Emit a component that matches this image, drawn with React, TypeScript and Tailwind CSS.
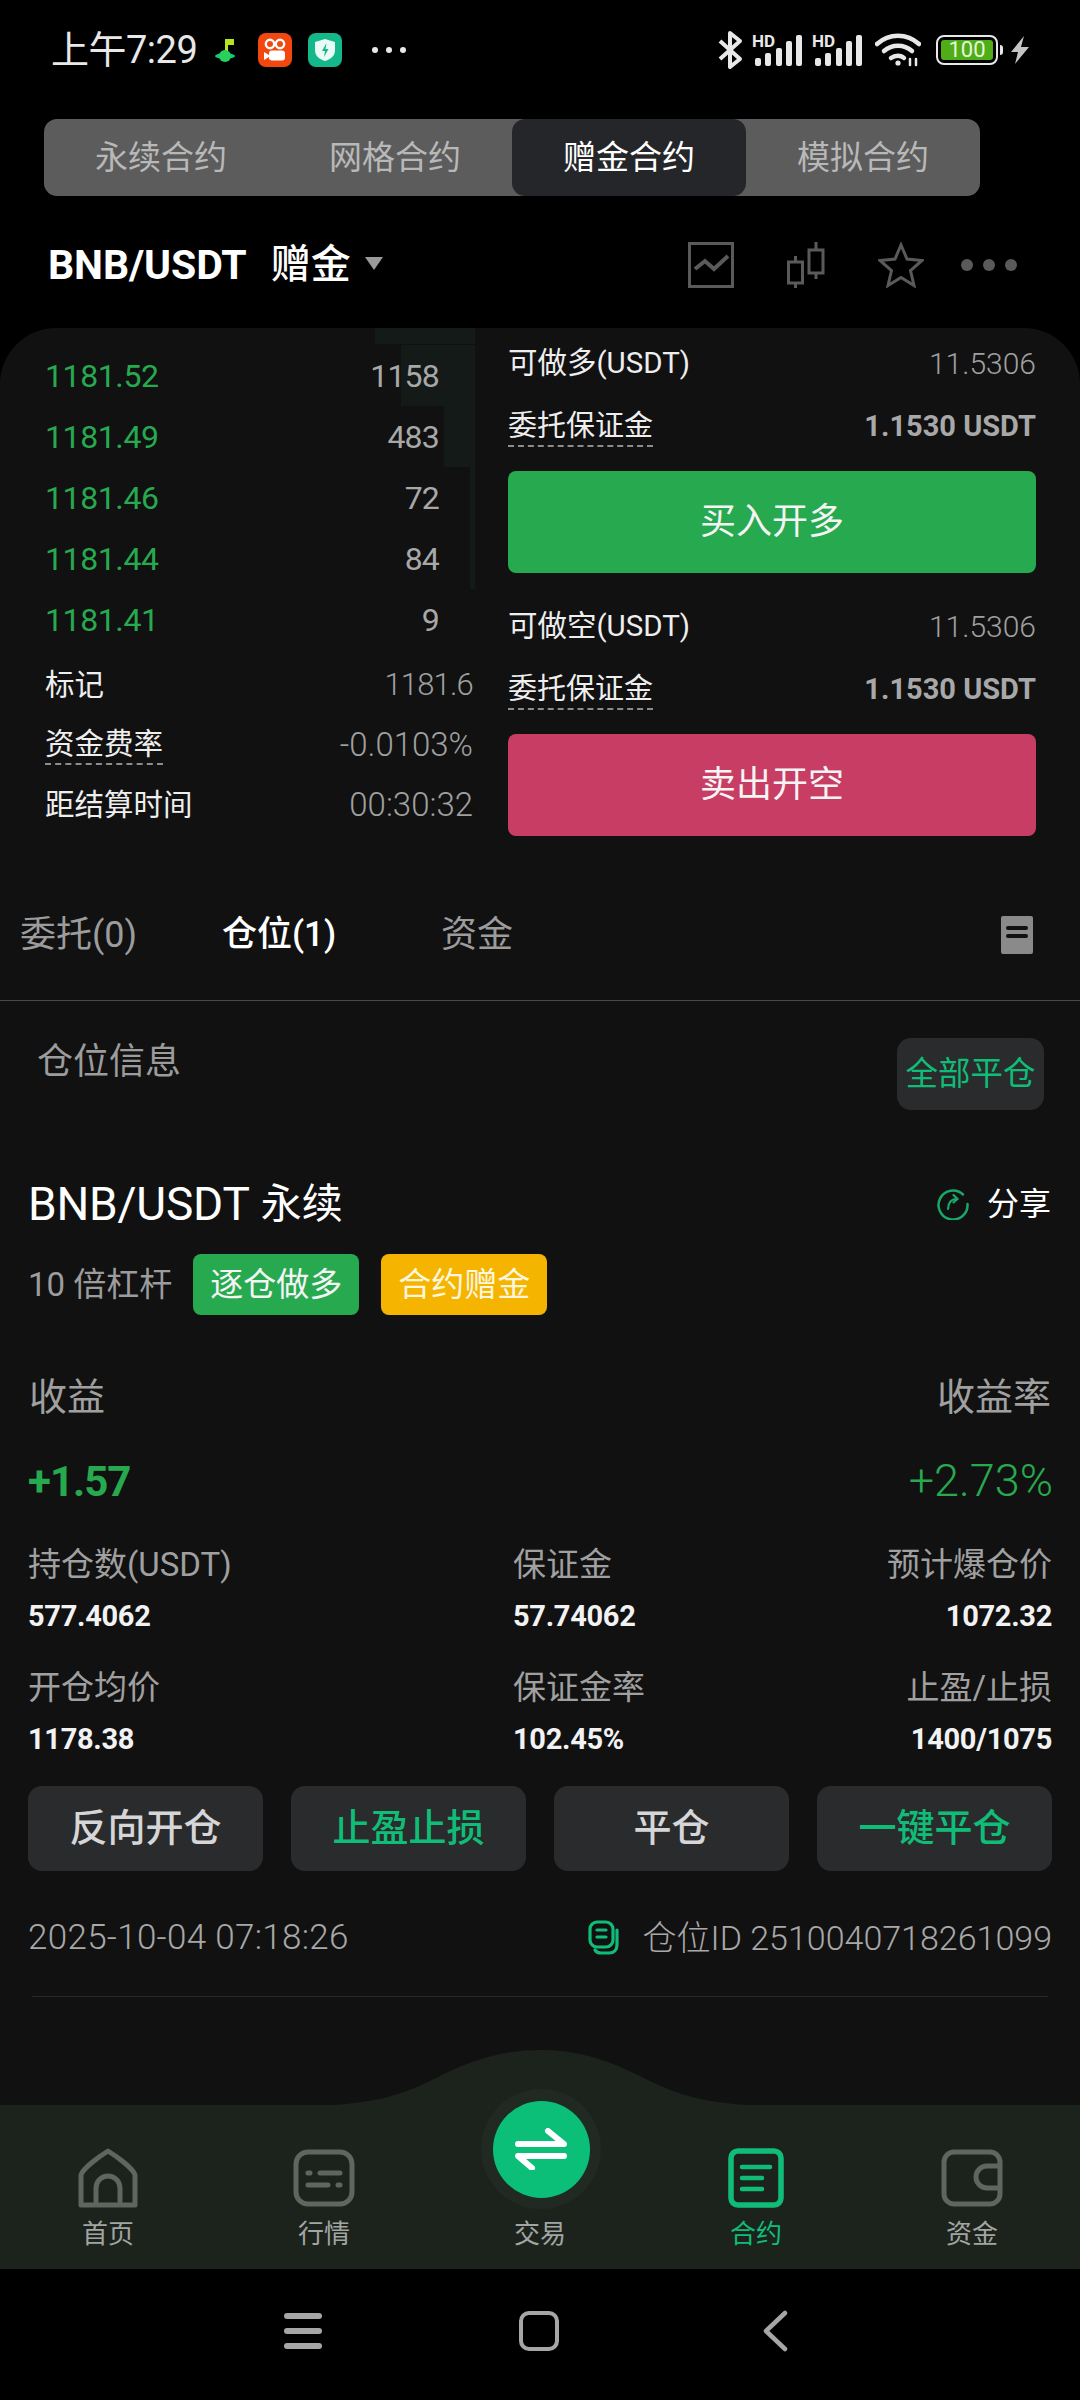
const depth = [
  { price: "1181.52", qty: "1158", bar: "w-[74px]" },
  { price: "1181.49", qty: "483", bar: "w-[31px]" },
  { price: "1181.46", qty: "72", bar: "w-[5px]" },
  { price: "1181.44", qty: "84", bar: "w-[5px]" },
  { price: "1181.41", qty: "9", bar: "w-0" },
];

const StatusBar = () => (
  <div className="flex h-[100px] shrink-0 items-center pl-[51px] pr-[50px]">
    <span className="w-[163px] text-[38px] leading-none tracking-[-0.5px] text-[#e8e8e8]">上午7:29</span>
    <svg width="22" height="30" viewBox="0 0 22 30">
      <path d="M11 4h9v6h-6v12h-3z" fill="#b5e61d" />
      <ellipse cx="11" cy="21" rx="10" ry="3" fill="#16c784" />
      <circle cx="11" cy="21" r="6" fill="#28d05c" />
    </svg>
    <svg className="ml-[22px]" width="34" height="34" viewBox="0 0 34 34">
      <rect width="34" height="34" rx="8" fill="#f2480f" />
      <circle cx="12" cy="11" r="4.2" fill="none" stroke="#fff" strokeWidth="2.4" />
      <circle cx="22" cy="11" r="4.2" fill="none" stroke="#fff" strokeWidth="2.4" />
      <rect x="11" y="17.5" width="16" height="10" rx="3" fill="#fff" />
      <path d="M6 19l5 3v2l-5 3z" fill="#fff" />
    </svg>
    <svg className="ml-[16px]" width="34" height="34" viewBox="0 0 34 34">
      <rect width="34" height="34" rx="8" fill="#14b88a" />
      <path d="M17 6l10 3v8c0 6-4 9-10 11-6-2-10-5-10-11V9z" fill="#eafaf5" />
      <path d="M18.5 10l-4.5 8h3l-1 6 4.5-8h-3z" fill="#14b88a" />
    </svg>
    <div className="ml-[30px] flex gap-[8px]">
      <div className="size-[6px] rounded-full bg-[#e8e8e8]" />
      <div className="size-[6px] rounded-full bg-[#e8e8e8]" />
      <div className="size-[6px] rounded-full bg-[#e8e8e8]" />
    </div>
    <div className="ml-auto flex items-center">
      <svg width="26" height="40" viewBox="0 0 24 40" fill="none" stroke="#e8e8e8" strokeWidth="4" strokeLinejoin="round">
        <path d="M2 11l20 18-10 8V3l10 8L2 29" />
      </svg>
      <Signal className="ml-[9px]" />
      <Signal className="ml-[10px]" />
      <svg className="ml-[13px]" width="46" height="34" viewBox="0 0 46 34" fill="none" stroke="#e8e8e8" strokeLinecap="round">
        <path d="M2 11c12-11 30-11 42 0" strokeWidth="4.5" />
        <path d="M9 18c8-7 20-7 28 0" strokeWidth="4.5" />
        <path d="M16 25c4-3 10-3 13 0" strokeWidth="4.5" />
        <circle cx="23" cy="30" r="2.6" fill="#e8e8e8" stroke="none" />
        <path d="M35 26v6M41 26v6" strokeWidth="2.5" />
      </svg>
      <div className="ml-[15px] flex items-center">
        <div className="flex h-[30px] w-[62px] rounded-[8px] border-[2.5px] border-[#e8e8e8] p-[3px]">
          <div className="flex flex-1 items-center justify-center rounded-[3px] bg-[#4fae18] text-[22px] leading-none text-[#e6f5dc]">100</div>
        </div>
        <div className="ml-[2px] h-[10px] w-[3px] rounded-r-full bg-[#e8e8e8]" />
      </div>
      <svg className="ml-[7px]" width="20" height="30" viewBox="0 0 20 30">
        <path d="M14 1L1 17h7l-3 12L19 12h-8z" fill="#c4c4c4" />
      </svg>
    </div>
  </div>
);

const Signal = ({ className }: { className: string }) => (
  <div className={`relative h-[32px] w-[50px] ${className}`}>
    <svg className="absolute inset-0" width="50" height="32" viewBox="0 0 50 32" fill="#e8e8e8">
      <rect x="3" y="24" width="6" height="8" rx="2" />
      <rect x="13" y="19" width="6" height="13" rx="2" />
      <rect x="24" y="14" width="6" height="18" rx="2" />
      <rect x="34" y="7" width="6" height="25" rx="2" />
      <rect x="44" y="1" width="6" height="31" rx="2" />
    </svg>
    <span className="absolute left-0 top-[-1px] text-[17px] font-bold leading-none text-[#e8e8e8]">HD</span>
  </div>
);

const ContractTabs = () => (
  <div className="mx-[44px] mt-[19px] flex h-[77px] w-[936px] shrink-0 rounded-[13px] bg-[#5c5c5c] text-[33px] text-[#b8b8b8]">
    <div className="flex w-[234px] items-center justify-center">永续合约</div>
    <div className="flex w-[234px] items-center justify-center">网格合约</div>
    <div className="flex w-[234px] items-center justify-center rounded-[13px] bg-[#25262a] text-white">赠金合约</div>
    <div className="flex w-[234px] items-center justify-center">模拟合约</div>
  </div>
);

const TitleRow = () => (
  <div className="flex h-[132px] shrink-0 items-center pl-[48px] pt-[6px]">
    <span className="text-[41px] font-bold leading-none tracking-[-0.1px] text-white">BNB/USDT</span>
    <span className="ml-[24px] text-[40px] font-medium leading-none text-white">赠金</span>
    <div className="ml-[14px] mt-[-4px] h-0 w-0 border-x-[9px] border-t-[13px] border-x-transparent border-t-[#9a9a9a]" />
    <div className="ml-auto mr-[63px] flex items-center">
      <svg width="46" height="46" viewBox="0 0 46 46" fill="none" stroke="#5a5a5a" strokeWidth="3">
        <rect x="1.5" y="1.5" width="43" height="43" />
        <path d="M7 27l10-8 9 8 14-13" strokeWidth="4" />
      </svg>
      <svg className="ml-[53px]" width="38" height="46" viewBox="0 0 38 46" fill="none" stroke="#5a5a5a" strokeWidth="3">
        <rect x="1.5" y="20" width="14" height="21" />
        <path d="M8.5 14v6M8.5 41v5" />
        <rect x="22" y="8" width="14" height="23" />
        <path d="M29 0v8M29 31v6" />
      </svg>
      <svg className="ml-[53px]" width="46" height="46" viewBox="0 0 46 46" fill="none" stroke="#5a5a5a" strokeWidth="3" strokeLinejoin="miter">
        <path d="M23 3l6 14 15 1.500-11.500 10 3.500 15-13-8-13 8 3.500-15-11.500-10 15-1.500z" />
      </svg>
      <div className="ml-[37px] flex gap-[10px]">
        <div className="size-[12px] rounded-full bg-[#5a5a5a]" />
        <div className="size-[12px] rounded-full bg-[#5a5a5a]" />
        <div className="size-[12px] rounded-full bg-[#5a5a5a]" />
      </div>
    </div>
  </div>
);

const OrderBook = () => (
  <div className="relative w-[508px] pl-[45px] pt-[17px]">
    <div className="absolute left-[375px] top-0 h-[16px] w-[100px] bg-[#131a18]" />
    {depth.map((row) => (
      <div key={row.price} className="relative flex h-[61px] w-[430px] items-center justify-between pr-[36px]">
        <div className={`absolute right-0 top-0 h-full bg-[#131a18] ${row.bar}`} />
        <span className="relative text-[32px] tracking-[-0.4px] text-[#27a950]">{row.price}</span>
        <span className="relative text-[32px] tracking-[-0.8px] text-[#a8a8a8]">{row.qty}</span>
      </div>
    ))}
    <div className="mt-[5px] w-[428px] text-[29.5px]">
      <div className="flex h-[60px] items-center justify-between">
        <span className="text-[#eeeeee]">标记</span>
        <span className="text-[31px] font-light tracking-[-0.8px] text-[#a0a0a0]">1181.6</span>
      </div>
      <div className="flex h-[60px] items-center justify-between">
        <span className="border-b-2 border-dashed border-[#8c8c8c] leading-[38px] text-[#eeeeee]">资金费率</span>
        <span className="text-[33px] font-light text-[#a0a0a0]">-0.0103%</span>
      </div>
      <div className="flex h-[60px] items-center justify-between">
        <span className="text-[#eeeeee]">距结算时间</span>
        <span className="text-[33px] font-light text-[#a0a0a0]">00:30:32</span>
      </div>
    </div>
  </div>
);

const OpenBlock = ({ label, button, color }: { label: string; button: string; color: string }) => (
  <div>
    <div className="flex h-[60px] items-center justify-between">
      <span className="text-[29.5px] text-[#eeeeee]">{label}</span>
      <span className="text-[30px] font-light text-[#a0a0a0]">11.5306</span>
    </div>
    <div className="mt-[4px] flex h-[60px] items-center justify-between">
      <span className="border-b-2 border-dashed border-[#8c8c8c] text-[29px] leading-[38px] text-[#eeeeee]">委托保证金</span>
      <span className="text-[29px] font-bold text-[#a8a8a8]">1.1530 USDT</span>
    </div>
    <div className={`mt-[14px] flex h-[102px] items-center justify-center rounded-[8px] text-[36px] text-[#f4f4f4] ${color}`}>{button}</div>
  </div>
);

const TradeForm = () => (
  <div className="flex w-[528px] flex-col gap-[23px] pt-[5px]">
    <OpenBlock label="可做多(USDT)" button="买入开多" color="bg-[#27a950]" />
    <OpenBlock label="可做空(USDT)" button="卖出开空" color="bg-[#c83d63]" />
  </div>
);

const SectionTabs = () => (
  <div className="flex h-[121px] items-center border-b border-[#4a4a4a] pb-[10px] pl-[20px] pr-[47px] text-[36px]">
    <span className="w-[202px] text-[#9c9c9c]">委托(0)</span>
    <span className="w-[219px] text-[35px] font-medium text-white">仓位(1)</span>
    <span className="text-[#9c9c9c]">资金</span>
    <div className="ml-auto flex h-[38px] w-[32px] flex-col gap-[4px] rounded-[2px] bg-[#8a8a8a] px-[5px] pt-[10px]">
      <div className="h-[4px] rounded-full bg-[#111112]" />
      <div className="h-[4px] rounded-full bg-[#111112]" />
    </div>
  </div>
);

const Position = () => (
  <div>
    <div className="mt-[37px] flex items-start justify-between pl-[37px] pr-[36px]">
      <span className="mt-[-4px] text-[36px] leading-[56px] text-[#9c9c9c]">仓位信息</span>
      <div className="flex h-[72px] w-[147px] items-center justify-center rounded-[14px] bg-[#2a2b2c] text-[32.5px] text-[#10bd78]">全部平仓</div>
    </div>
    <div className="mt-[64px] flex h-[60px] items-center pl-[28px] pr-[29px]">
      <span className="text-[46px] leading-none tracking-[-0.2px] text-white">BNB/USDT</span>
      <span className="ml-[11px] text-[41px] leading-none text-white">永续</span>
      <svg className="ml-auto" width="32" height="32" viewBox="0 0 32 32" fill="none" stroke="#19a868" strokeWidth="2.5" strokeLinecap="round">
        <path d="M26 6.500A14.500 14.500 0 1 0 30.500 16" />
        <path d="M11 21c0-6 3-10 9-10M16.500 7l4 4-4 3.500" strokeWidth="2.2" />
      </svg>
      <span className="ml-[18px] text-[32px] leading-none text-white">分享</span>
    </div>
    <div className="mt-[20px] flex h-[61px] items-center pl-[28px]">
      <span className="text-[33px] text-[#9c9c9c]">10 倍杠杆</span>
      <div className="ml-[21px] flex h-full w-[166px] items-center justify-center rounded-[8px] bg-[#27a950] text-[33px] text-[#f4f4f4]">逐仓做多</div>
      <div className="ml-[22px] flex h-full w-[166px] items-center justify-center rounded-[8px] bg-[#f4b400] text-[33px] text-[#fdf6df]">合约赠金</div>
    </div>
    <div className="mt-[57px] flex h-[50px] items-center justify-between px-[29px] text-[38px] text-[#a0a0a0]">
      <span>收益</span>
      <span>收益率</span>
    </div>
    <div className="mt-[29px] flex h-[60px] items-center justify-between pl-[28px] pr-[27px] text-[#27a950]">
      <span className="text-[42px] font-bold tracking-[-1px]">+1.57</span>
      <span className="text-[45px] font-light">+2.73%</span>
    </div>
    <div className="mt-[32px] grid grid-cols-[485px_1fr_auto] gap-y-[30px] px-[28px]">
      <Stat label="持仓数(USDT)" value="577.4062" />
      <Stat label="保证金" value="57.74062" />
      <Stat label="预计爆仓价" value="1072.32" right />
      <Stat label="开仓均价" value="1178.38" />
      <Stat label="保证金率" value="102.45%" />
      <Stat label="止盈/止损" value="1400/1075" right />
    </div>
    <div className="mt-[27px] grid grid-cols-4 gap-[28px] px-[28px]">
      <ActionButton label="反向开仓" />
      <ActionButton label="止盈止损" green />
      <ActionButton label="平仓" />
      <ActionButton label="一键平仓" green />
    </div>
    <div className="mt-[45px] flex h-[44px] items-center pl-[28px] pr-[28px] text-[34px] font-light text-[#a8a8a8]">
      <span className="text-[35px] tracking-[0.3px]">2025-10-04 07:18:26</span>
      <svg className="ml-auto" width="32" height="36" viewBox="0 0 32 36" fill="none" stroke="#10bd78" strokeWidth="3.200" strokeLinecap="round">
        <rect x="2" y="2" width="23" height="25" rx="7" />
        <path d="M9 10h9M9 17h9" />
        <path d="M29 10v15c0 5-3 8-8 8H13c-3 0-5-1-6-3" />
      </svg>
      <span className="ml-[23px]">仓位ID 2510040718261099</span>
    </div>
    <div className="mx-[32px] mt-[36px] h-px bg-[#2a2a2a]" />
  </div>
);

const Stat = ({ label, value, right }: { label: string; value: string; right?: boolean }) => (
  <div className={right ? "text-right" : ""}>
    <div className="h-[44px] text-[33px] leading-[44px] text-[#a0a0a0]">{label}</div>
    <div className="mt-[9px] h-[40px] text-[29px] font-bold leading-[40px] tracking-[-0.3px] text-[#f2f2f2]">{value}</div>
  </div>
);

const ActionButton = ({ label, green }: { label: string; green?: boolean }) => (
  <div className={`flex h-[85px] items-center justify-center rounded-[14px] bg-[#2a2b2c] text-[38px] font-medium ${green ? "text-[#10bd78]" : "text-[#d6d6d8]"}`}>
    {label}
  </div>
);

const NavItem = ({ label, active, children }: { label: string; active?: boolean; children?: React.ReactNode }) => (
  <div className="flex w-[216px] flex-col items-center">
    <div className="flex h-[63px] items-center justify-center">{children}</div>
    <span className={`mt-[7px] text-[26px] leading-[36px] ${active ? "text-[#10bd78]" : "text-[#a2a5a2]"}`}>{label}</span>
  </div>
);

const BottomNav = () => (
  <div className="relative h-[164px] shrink-0 bg-[#1c231d] pt-[41px]">
    <svg className="absolute left-[290px] top-[-55px]" width="500" height="56" viewBox="0 0 500 56" fill="#1c231d">
      <path d="M0 56c70 0 105-6 150-30C190 6 220 0 250 0s60 6 100 26c45 24 80 30 150 30z" />
    </svg>
    <div className="absolute left-[481px] top-[-16px] flex size-[120px] items-center justify-center rounded-full bg-[#202a22]">
      <div className="flex size-[97px] items-center justify-center rounded-full bg-[#0cbf78]">
        <svg width="52" height="42" viewBox="0 0 52 42" fill="none" stroke="#fff" strokeWidth="6" strokeLinecap="round" strokeLinejoin="round">
          <path d="M3 16h46L33 3" />
          <path d="M49 28H3l14 12" />
        </svg>
      </div>
    </div>
    <div className="relative flex">
      <NavItem label="首页">
        <svg width="60" height="60" viewBox="0 0 60 60" fill="none" stroke="#5e665f" strokeWidth="5" strokeLinejoin="round">
          <path d="M30 3C22 8 5 20 3 27v30h54V27C55 20 38 8 30 3z" />
          <path d="M18 57V40a12 12 0 0 1 24 0v17" />
        </svg>
      </NavItem>
      <NavItem label="行情">
        <svg width="62" height="58" viewBox="0 0 62 58" fill="none" stroke="#5e665f" strokeLinecap="round">
          <rect x="3" y="3" width="56" height="52" rx="12" strokeWidth="5" />
          <path d="M15 24h2M27 24h20M15 36h20M45 36h2" strokeWidth="5" />
        </svg>
      </NavItem>
      <NavItem label="交易" />
      <NavItem label="合约" active>
        <svg width="56" height="60" viewBox="0 0 56 60" fill="none" stroke="#10bd78" strokeLinecap="round">
          <rect x="3" y="3" width="50" height="54" rx="7" strokeWidth="5.500" />
          <path d="M14 19h28M14 30h20M14 41h20" strokeWidth="4.500" />
        </svg>
      </NavItem>
      <NavItem label="资金">
        <svg width="62" height="58" viewBox="0 0 62 58" fill="none" stroke="#5e665f" strokeWidth="5" strokeLinejoin="round">
          <path d="M59 17V13a10 10 0 0 0-10-10H13A10 10 0 0 0 3 13v32a10 10 0 0 0 10 10h36a10 10 0 0 0 10-10V39" />
          <path d="M59 17H46a11 11 0 0 0 0 22h13z" />
        </svg>
      </NavItem>
    </div>
  </div>
);

const SystemBar = () => (
  <div className="flex flex-1 items-center bg-black pb-[8px] pl-[284px]">
    <div className="flex w-[38px] flex-col gap-[9px]">
      <div className="h-[6px] rounded-full bg-[#a6a6a6]" />
      <div className="h-[6px] rounded-full bg-[#a6a6a6]" />
      <div className="h-[6px] rounded-full bg-[#a6a6a6]" />
    </div>
    <div className="ml-[197px] size-[40px] rounded-[10px] border-[4px] border-[#a6a6a6]" />
    <svg className="ml-[203px]" width="26" height="42" viewBox="0 0 26 42" fill="none" stroke="#a6a6a6" strokeWidth="4.500" strokeLinecap="round" strokeLinejoin="round">
      <path d="M23 3L4 21l19 18" />
    </svg>
  </div>
);

export default function App() {
  return (
    <div className="flex h-[2400px] w-[1080px] flex-col overflow-hidden bg-black font-['Roboto','Noto_Sans_CJK_SC',sans-serif]">
      <StatusBar />
      <ContractTabs />
      <TitleRow />
      <div className="h-[1777px] shrink-0 rounded-t-[56px] bg-[#111112]">
        <div className="flex h-[552px]">
          <OrderBook />
          <TradeForm />
        </div>
        <SectionTabs />
        <Position />
      </div>
      <BottomNav />
      <SystemBar />
    </div>
  );
}
